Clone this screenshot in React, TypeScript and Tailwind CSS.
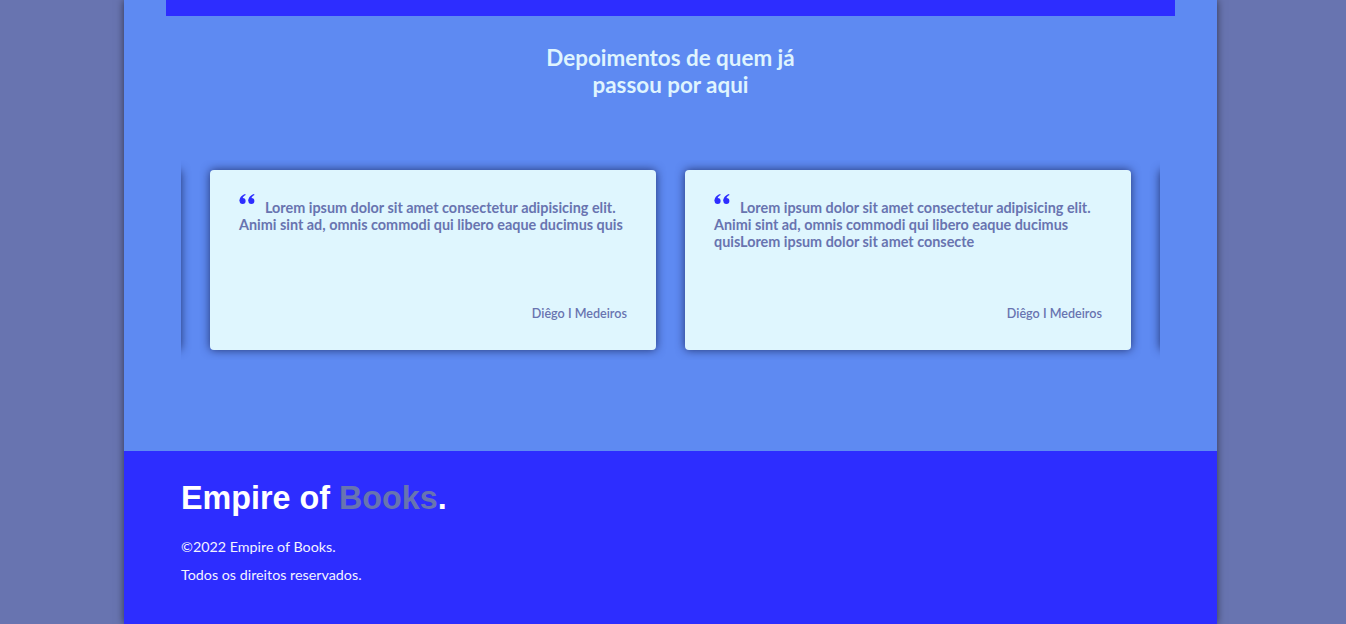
import React from "react";

const depoimentos = [
  {
    texto:
      "Lorem ipsum dolor sit amet consectetur adipisicing elit. Animi sint ad, omnis commodi qui libero eaque ducimus quis",
    autor: "Diêgo I Medeiros",
  },
  {
    texto:
      "Lorem ipsum dolor sit amet consectetur adipisicing elit. Animi sint ad, omnis commodi qui libero eaque ducimus quisLorem ipsum dolor sit amet consecte",
    autor: "Diêgo I Medeiros",
  },
];

function QuoteMark() {
  return (
    <svg
      viewBox="0 0 16 10"
      className="inline-block w-[16px] h-[10px] mr-[10px] relative -top-[9px] align-baseline fill-[#2d2dff]"
    >
      <circle cx="3.6" cy="7" r="3" />
      <path d="M0.6 7.2C0.4 3.8 2.4 1.2 6.2 0L6.7 1.1C4.6 2 3.6 3.4 3.6 4.8Z" />
      <circle cx="12.4" cy="7" r="3" />
      <path d="M9.4 7.2C9.2 3.8 11.2 1.2 15 0L15.5 1.1C13.4 2 12.4 3.4 12.4 4.8Z" />
    </svg>
  );
}

function Card({ texto, autor }: { texto: string; autor: string }) {
  return (
    <div className="w-[446px] h-[180px] shrink-0 bg-[#dff6fe] rounded-[4px] shadow-[0_0_10px_rgba(20,30,80,0.8)] px-[29px] pt-[29px] pb-[28px] flex flex-col justify-between">
      <p className="text-[14.4px] leading-[17px] font-bold text-[#6874b0]">
        <QuoteMark />
        {texto}
      </p>
      <span className="self-end text-[12.6px] leading-[17px] font-semibold text-[#6874b0]">{autor}</span>
    </div>
  );
}

export default function App() {
  return (
    <div className="min-h-screen bg-[#6874b0] font-['Lato',sans-serif] overflow-hidden">
      <div className="ml-[124px] w-[1093px] shadow-[0_0_8px_rgba(0,0,0,0.55)]">
        {/* Depoimentos */}
        <section className="bg-[#5e8af2] pb-[91px]">
          <div className="mx-[42px] h-[16px] bg-[#2d2dff]" />
          <h2 className="mt-[28px] text-center text-[22.4px] leading-[27px] font-bold text-[#dff4fe]">
            Depoimentos de quem já
            <br />
            passou por aqui
          </h2>

          <div className="mx-[57px] mt-[62px] overflow-hidden py-[10px]">
            <div className="flex gap-[29px] pl-[29px]">
              <div className="-ml-[475px]">
                <Card {...depoimentos[1]} />
              </div>
              {depoimentos.map((d, i) => (
                <Card key={i} {...d} />
              ))}
              <Card {...depoimentos[0]} />
            </div>
          </div>
        </section>

        {/* Rodapé */}
        <footer className="bg-[#2d2dff] px-[57px] pt-[28px] pb-[40px]">
          <h3 className="font-['Liberation_Sans',Arial,sans-serif] font-bold text-[32.3px] leading-[38px] text-white">
            Empire of <span className="text-[#6874b0]">Books</span>.
          </h3>
          <p className="mt-[21px] text-[14.3px] leading-[18px] text-[#f3f3ff]">©2022 Empire of Books.</p>
          <p className="mt-[10px] text-[14.3px] leading-[18px] text-[#f3f3ff]">Todos os direitos reservados.</p>
        </footer>
      </div>
    </div>
  );
}
